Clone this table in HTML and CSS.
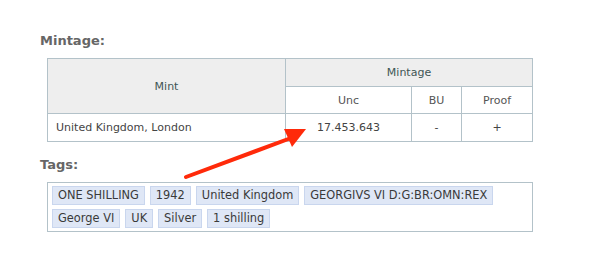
FILE: index.html
```html
<!DOCTYPE html>
<html>
<head>
<meta charset="utf-8">
<link rel="stylesheet" href="styles.css">
</head>
<body>
<div class="page">
  <h3 class="section-title">Mintage:</h3>
  <table class="mintage">
    <colgroup>
      <col class="c-mint">
      <col class="c-unc">
      <col class="c-bu">
      <col class="c-proof">
    </colgroup>
    <thead>
      <tr class="r1">
        <th rowspan="2" class="th-main">Mint</th>
        <th colspan="3" class="th-main">Mintage</th>
      </tr>
      <tr class="r2">
        <th class="th-sub">Unc</th>
        <th class="th-sub">BU</th>
        <th class="th-sub">Proof</th>
      </tr>
    </thead>
    <tbody>
      <tr class="r3">
        <td class="mint-name">United Kingdom, London</td>
        <td class="num">17.453.643</td>
        <td class="num">-</td>
        <td class="num">+</td>
      </tr>
    </tbody>
  </table>

  <h3 class="section-title tags-title">Tags:</h3>
  <div class="tags">
    <span class="tag">ONE SHILLING</span>
    <span class="tag">1942</span>
    <span class="tag">United Kingdom</span>
    <span class="tag">GEORGIVS VI D:G:BR:OMN:REX</span>
    <span class="tag">George VI</span>
    <span class="tag">UK</span>
    <span class="tag">Silver</span>
    <span class="tag">1 shilling</span>
  </div>
</div>

<svg class="pointer" width="589" height="275" viewBox="0 0 589 275">
  <line x1="186" y1="177" x2="291" y2="138" stroke="#ff2a0a" stroke-width="4" stroke-linecap="round"/>
  <polygon points="284,129 306,129 292,147" fill="#ff2a0a"/>
</svg>
</body>
</html>
```

FILE: styles.css
```css
html, body {
  margin: 0;
  padding: 0;
  background: #ffffff;
}

body {
  font-family: "DejaVu Sans", Verdana, sans-serif;
  font-size: 11px;
  color: #444;
  position: relative;
  width: 589px;
  height: 275px;
  overflow: hidden;
}

.page {
  padding: 33px 0 0 40px;
}

.section-title {
  margin: 0;
  font-size: 13px;
  font-weight: bold;
  color: #666;
  line-height: 16px;
}

.mintage {
  margin: 9px 0 0 7px;
  border-collapse: collapse;
  table-layout: fixed;
  width: 485px;
}

.c-mint { width: 238px; }
.c-unc { width: 126px; }
.c-bu { width: 50px; }
.c-proof { width: 71px; }

.mintage th,
.mintage td {
  border: 1px solid #b3c2c9;
  padding: 0 8px;
  font-weight: normal;
}

.th-main {
  background: #eeeeee;
  color: #3f5555;
}

.th-sub {
  color: #555;
  background: #fff;
}

.r1 { height: 28px; }
.r2 { height: 27px; }
.r3 { height: 28px; }

.mintage td {
  color: #444;
}

.mint-name { text-align: left; }
.num { text-align: center; color: #333; }

.tags-title {
  margin-top: 15px;
}

.tags {
  margin: 9px 0 0 7px;
  width: 480px;
  border: 1px solid #b3c2c9;
  padding: 3px 0 3px 4px;
  display: flex;
  flex-wrap: wrap;
  gap: 4px 5px;
}

.tag {
  display: inline-block;
  background: #dfe7f6;
  border: 1px solid #c9d6ee;
  color: #3a3a3a;
  padding: 0 5px;
  height: 17px;
  line-height: 17px;
  font-size: 11.4px;
  white-space: nowrap;
}

.pointer {
  position: absolute;
  left: 0;
  top: 0;
  pointer-events: none;
}
```
